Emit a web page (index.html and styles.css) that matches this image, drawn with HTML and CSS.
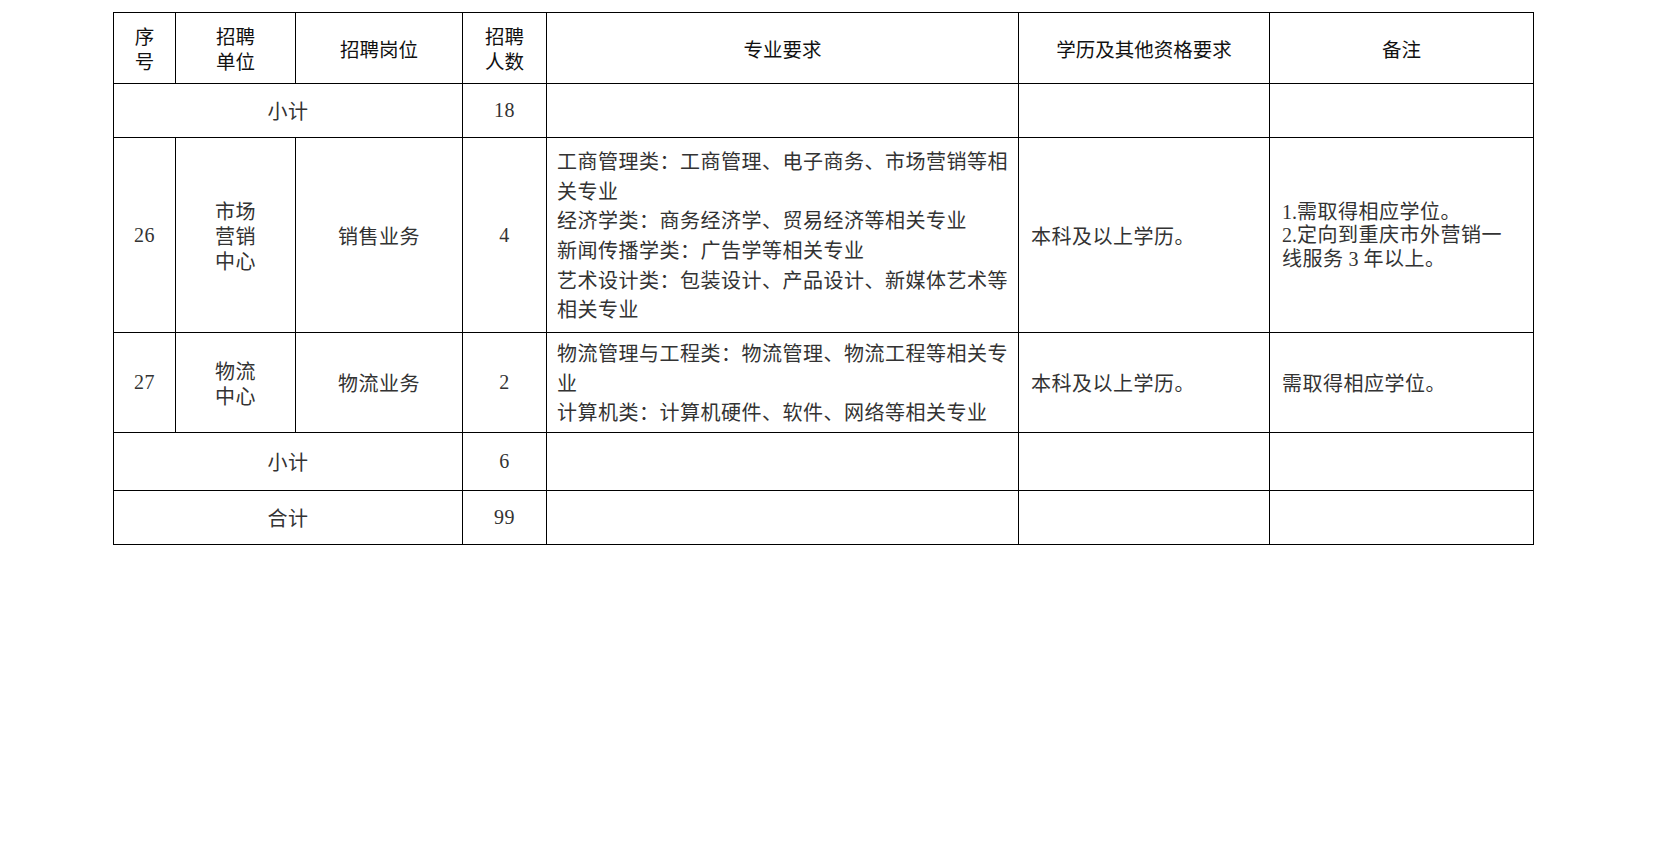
FILE: index.html
```html
<!DOCTYPE html>
<html lang="zh-CN">
<head>
<meta charset="utf-8">
<title>招聘岗位表</title>
<link rel="stylesheet" href="styles.css">
</head>
<body>
<table class="jobs">
  <colgroup>
    <col class="c-no">
    <col class="c-unit">
    <col class="c-post">
    <col class="c-count">
    <col class="c-major">
    <col class="c-edu">
    <col class="c-note">
  </colgroup>
  <tr class="r-head">
    <th class="stack">序<br>号</th>
    <th class="stack">招聘<br>单位</th>
    <th>招聘岗位</th>
    <th class="stack">招聘<br>人数</th>
    <th>专业要求</th>
    <th>学历及其他资格要求</th>
    <th>备注</th>
  </tr>
  <tr class="r-sub">
    <td colspan="3" class="mid">小计</td>
    <td class="mid num">18</td>
    <td></td>
    <td></td>
    <td></td>
  </tr>
  <tr class="r-26">
    <td class="mid num">26</td>
    <td class="mid stack">市场<br>营销<br>中心</td>
    <td class="mid">销售业务</td>
    <td class="mid num">4</td>
    <td class="major">工商管理类：工商管理、电子商务、市场营销等相<br>关专业<br>经济学类：商务经济学、贸易经济等相关专业<br>新闻传播学类：广告学等相关专业<br>艺术设计类：包装设计、产品设计、新媒体艺术等<br>相关专业</td>
    <td class="edu">本科及以上学历。</td>
    <td class="note"><span class="num">1.</span>需取得相应学位。<br><span class="num">2.</span>定向到重庆市外营销一<br>线服务 <span class="num">3</span> 年以上。</td>
  </tr>
  <tr class="r-27">
    <td class="mid num">27</td>
    <td class="mid stack">物流<br>中心</td>
    <td class="mid">物流业务</td>
    <td class="mid num">2</td>
    <td class="major">物流管理与工程类：物流管理、物流工程等相关专<br>业<br>计算机类：计算机硬件、软件、网络等相关专业</td>
    <td class="edu">本科及以上学历。</td>
    <td class="note">需取得相应学位。</td>
  </tr>
  <tr class="r-sub2">
    <td colspan="3" class="mid">小计</td>
    <td class="mid num">6</td>
    <td></td>
    <td></td>
    <td></td>
  </tr>
  <tr class="r-total">
    <td colspan="3" class="mid">合计</td>
    <td class="mid num">99</td>
    <td></td>
    <td></td>
    <td></td>
  </tr>
</table>
</body>
</html>
```

FILE: styles.css
```css
html, body {
  margin: 0;
  padding: 0;
  background: #ffffff;
}

body {
  padding: 12px 0 0 113px;
}

.jobs {
  border-collapse: collapse;
  table-layout: fixed;
  width: 1421px;
  font-family: "Noto Sans CJK SC", "Noto Sans", sans-serif;
  font-size: 20px;
  color: #333;
}

.c-no { width: 62px; }
.c-unit { width: 120px; }
.c-post { width: 167px; }
.c-count { width: 84px; }
.c-major { width: 472px; }
.c-edu { width: 251px; }
.c-note { width: 264px; }

.jobs th,
.jobs td {
  border: 1px solid #000;
  padding: 0;
  vertical-align: middle;
  font-weight: 400;
}

.jobs th {
  color: #111;
  text-align: center;
  line-height: 25px;
  font-size: 19.5px;
}

.jobs td {
  letter-spacing: 0.5px;
}

.r-head { height: 71px; }
.r-sub { height: 54px; }
.r-26 { height: 195px; }
.r-27 { height: 100px; }
.r-sub2 { height: 58px; }
.r-total { height: 54px; }

.mid {
  text-align: center;
}

.stack {
  line-height: 25px;
}

.num {
  font-family: "Liberation Serif", "Times New Roman", serif;
  letter-spacing: 0;
}

.major {
  text-align: left;
  padding: 0 0 0 10px !important;
  line-height: 29.7px;
  white-space: nowrap;
}

.edu {
  text-align: left;
  padding: 0 0 0 12px !important;
  line-height: 25px;
}

.note {
  text-align: left;
  padding: 0 0 0 12px !important;
  line-height: 21.5px;
  white-space: nowrap;
}
```
